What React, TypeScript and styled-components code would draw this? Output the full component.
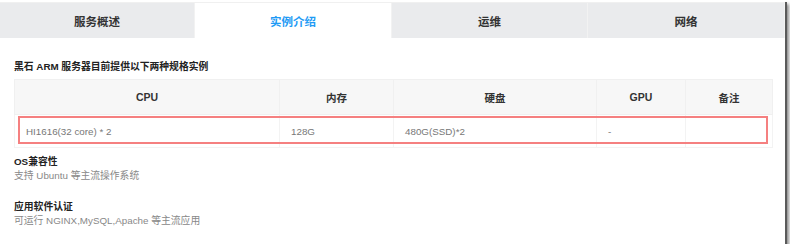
import React from "react";
import styled, { createGlobalStyle } from "styled-components";

const GlobalStyle = createGlobalStyle`
    html, body {
        margin: 0;
        padding: 0;
        background: #ffffff;
    }
    body {
        font-family: "Liberation Sans", Arial, "Noto Sans CJK SC", sans-serif;
    }
`;

const Frame = styled.div`
    width: 785px;
    height: 244px;
    background: #ffffff;
    overflow: hidden;
    box-shadow: 2px 2px 0 #5a5a5a, 4px 4px 3px rgba(0, 0, 0, 0.45);
`;

const TabBar = styled.div`
    margin-top: 2px;
    height: 35px;
    display: grid;
    grid-template-columns: 195px 197px 196px 197px;
    background: #eaebed;
    border-top: 1px solid #f0f0f0;
`;

const Tab = styled.div<{ $active?: boolean }>`
    display: flex;
    align-items: center;
    justify-content: center;
    font-size: 11.5px;
    font-weight: bold;
    color: ${(props) => (props.$active ? "#1e9bf5" : "#333333")};
    background: ${(props) => (props.$active ? "#ffffff" : "#eaebed")};
    border-right: 1px solid #f2f2f2;
`;

const Content = styled.div`
    padding: 21px 13px 0 14px;
    font-size: 9.8px;
`;

const Title = styled.div`
    font-weight: bold;
    line-height: 16px;
    color: #222222;
    margin-bottom: 4px;
`;

const TableWrap = styled.div`
    position: relative;
`;

const Table = styled.table`
    width: 758px;
    border-collapse: collapse;
    table-layout: fixed;
    font-size: 9.8px;
`;

const Th = styled.th`
    height: 34px;
    padding: 0;
    background: #f7f7f7;
    border: 1px solid #f0f0f0;
    color: #333333;
    font-size: 10.5px;
    font-weight: bold;
    text-align: center;
`;

const Td = styled.td`
    height: 32px;
    padding: 0 0 0 11px;
    border: 1px solid #f3f3f3;
    color: #777777;
    text-align: left;
`;

const Highlight = styled.div`
    position: absolute;
    left: 4px;
    top: 37px;
    width: 746px;
    height: 24px;
    border: 2px solid #f58080;
    pointer-events: none;
`;

const Section = styled.div`
    margin-top: 7px;
    & + & {
        margin-top: 17px;
    }
`;

const SectionTitle = styled.div`
    font-weight: bold;
    line-height: 14px;
    color: #222222;
`;

const SectionText = styled.div`
    line-height: 14px;
    color: #888888;
`;

const tabs = ["服务概述", "实例介绍", "运维", "网络"];
const columns = [
    { label: "CPU", width: 265 },
    { label: "内存", width: 114 },
    { label: "硬盘", width: 203 },
    { label: "GPU", width: 89 },
    { label: "备注", width: 87 },
];
const row = ["HI1616(32 core) * 2", "128G", "480G(SSD)*2", "-", ""];

export default function App() {
    return (
        <>
            <GlobalStyle />
            <Frame>
                <TabBar>
                    {tabs.map((t, i) => (
                        <Tab key={t} $active={i === 1}>
                            {t}
                        </Tab>
                    ))}
                </TabBar>
                <Content>
                    <Title>黑石 ARM 服务器目前提供以下两种规格实例</Title>
                    <TableWrap>
                        <Table>
                            <colgroup>
                                {columns.map((c) => (
                                    <col key={c.label} style={{ width: c.width }} />
                                ))}
                            </colgroup>
                            <thead>
                                <tr>
                                    {columns.map((c) => (
                                        <Th key={c.label}>{c.label}</Th>
                                    ))}
                                </tr>
                            </thead>
                            <tbody>
                                <tr>
                                    {row.map((v, i) => (
                                        <Td key={i}>{v}</Td>
                                    ))}
                                </tr>
                            </tbody>
                        </Table>
                        <Highlight />
                    </TableWrap>
                    <Section>
                        <SectionTitle>OS兼容性</SectionTitle>
                        <SectionText>支持 Ubuntu 等主流操作系统</SectionText>
                    </Section>
                    <Section>
                        <SectionTitle>应用软件认证</SectionTitle>
                        <SectionText>可运行 NGINX,MySQL,Apache 等主流应用</SectionText>
                    </Section>
                </Content>
            </Frame>
        </>
    );
}
